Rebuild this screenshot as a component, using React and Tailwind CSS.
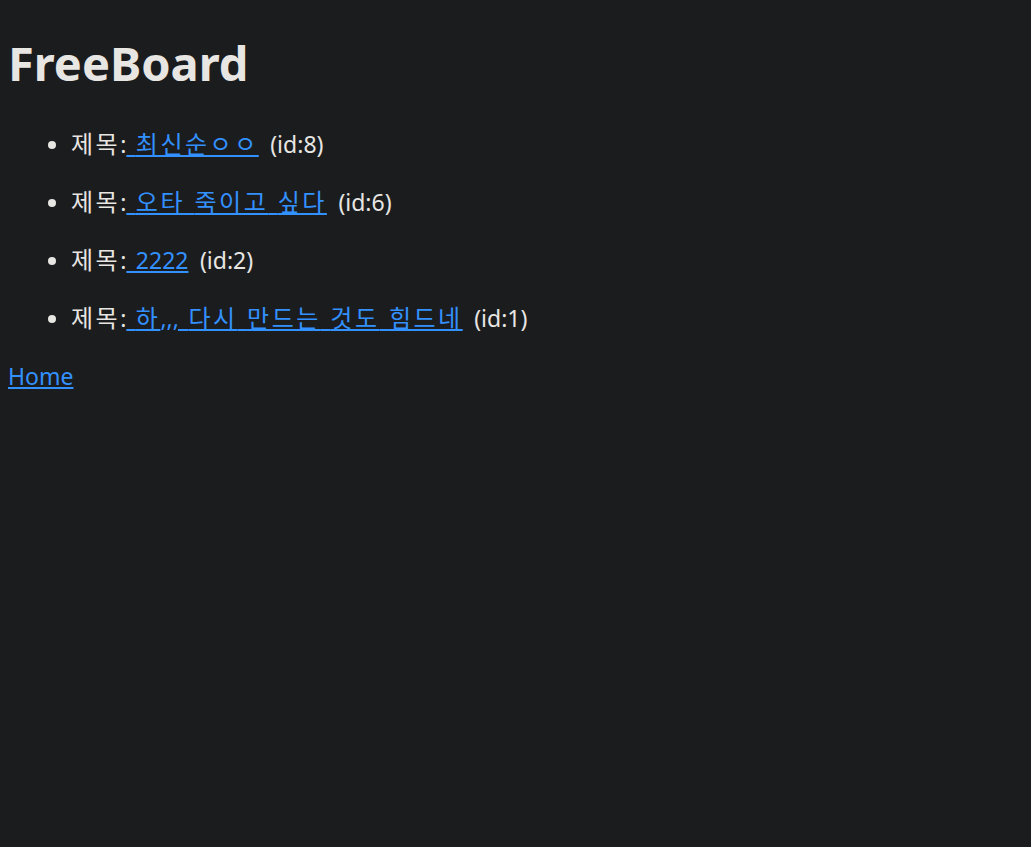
const posts = [
  { id: 8, title: " 최신순ㅇㅇ" },
  { id: 6, title: " 오타 죽이고 싶다" },
  { id: 2, title: " 2222" },
  { id: 1, title: " 하,,, 다시 만드는 것도 힘드네" },
]

// Hangul runs get a little extra width so they match the wider Korean font in the shot
const Ko = ({ text }) =>
  text.split(/([\u3131-\uD7A3]+)/).map((part, i) =>
    /[\u3131-\uD7A3]/.test(part) ? (
      <span key={i} className="text-[24px] tracking-[2.5px]">
        {part}
      </span>
    ) : (
      part
    )
  )

export default function App() {
  return (
    <div
      className="min-h-screen bg-[#1b1c1e] text-[#e8e6e3] px-2 pt-[31px]"
      style={{ fontFamily: '"Noto Sans", "Noto Sans CJK KR", sans-serif' }}
    >
      <h1 className="text-[47px] leading-[64px] font-bold">FreeBoard</h1>
      <ul className="list-disc pl-[63px] mt-[32px] space-y-[24px] text-[23px] leading-[34px] [word-spacing:3.5px]">
        {posts.map((post) => (
          <li key={post.id} className="marker:text-[#e8e6e3]">
            <Ko text="제목:" />
            <a href="#" className="text-[#3391ff] underline whitespace-pre pr-[2px]">
              <Ko text={post.title} />
            </a>{" "}
            (id:{post.id})
          </li>
        ))}
      </ul>
      <a
        href="#"
        className="block mt-[24px] w-fit text-[23px] leading-[34px] text-[#3391ff] underline"
      >
        Home
      </a>
    </div>
  )
}
